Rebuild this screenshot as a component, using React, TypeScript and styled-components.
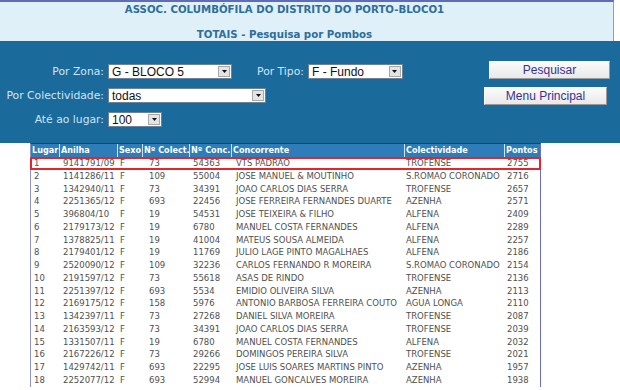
import React from "react";
import styled, { createGlobalStyle } from "styled-components";

const GlobalStyle = createGlobalStyle`
  html, body {
    margin: 0;
    padding: 0;
    background: #ffffff;
  }
`;

const Page = styled.div`
  width: 620px;
  height: 390px;
  overflow: hidden;
  font-family: "DejaVu Sans", sans-serif;
`;

const Banner = styled.header`
  width: 614px;
  height: 41px;
  box-sizing: border-box;
  background: #e0f0f8;
  border-top: 2px solid #5f6db6;
  border-right: 1px solid #8c9cc8;
  display: flex;
  flex-direction: column;
  align-items: center;
  padding: 2px 44px 0 0;
  gap: 13px;
`;

const BannerLine = styled.div`
  font-family: "DejaVu Sans", sans-serif;
  font-weight: bold;
  font-size: 10.2px;
  line-height: 12px;
  color: #2d6e9c;
  white-space: nowrap;
`;

const Panel = styled.section`
  height: 102px;
  background: #1b6a9c;
  display: flex;
`;

const FormArea = styled.div`
  flex: 0 0 484px;
  padding-top: 23px;
  display: flex;
  flex-direction: column;
  gap: 9px;
`;

const FormRow = styled.div`
  display: flex;
  align-items: center;
  height: 15px;
`;

const Label = styled.label<{ $width?: number; $gap?: number }>`
  flex: 0 0 ${(p) => (p.$width ? `${p.$width}px` : "auto")};
  margin-left: ${(p) => p.$gap ?? 0}px;
  margin-right: 4px;
  text-align: right;
  font-family: "DejaVu Sans", sans-serif;
  font-size: 10.8px;
  color: #cfe5f5;
  white-space: nowrap;
`;

const Select = styled.div<{ $width: number }>`
  width: ${(p) => p.$width}px;
  height: 15px;
  box-sizing: border-box;
  background: #ffffff;
  border: 1px solid #6f8194;
  display: flex;
  align-items: center;
  justify-content: space-between;
  padding: 0 1px 0 3px;
`;

const SelectValue = styled.span`
  font-family: "Liberation Sans", Arial, sans-serif;
  font-size: 12px;
  color: #111111;
  white-space: nowrap;
`;

const SelectArrow = styled.span`
  width: 12px;
  height: 11px;
  box-sizing: border-box;
  background: #e4e4e4;
  border: 1px solid #a9a9a9;
  display: flex;
  align-items: center;
  justify-content: center;
`;

const ButtonColumn = styled.div`
  padding-top: 20px;
  display: flex;
  flex-direction: column;
  align-items: flex-start;
  gap: 8px;
`;

const Button = styled.button<{ $width: number; $offset?: number }>`
  width: ${(p) => p.$width}px;
  height: 18px;
  margin-left: ${(p) => p.$offset ?? 0}px;
  box-sizing: border-box;
  padding: 0;
  background: linear-gradient(#fbfbfb, #e9e9e9);
  border: 1px solid;
  border-color: #ffffff #9a9a9a #9a9a9a #ffffff;
  font-family: "Liberation Sans", Arial, sans-serif;
  font-size: 12px;
  color: #353392;
  cursor: pointer;
`;

const Table = styled.div`
  margin-left: 30px;
  width: 511px;
  box-sizing: border-box;
  border-left: 1px solid #8f93c6;
  border-right: 1px solid #6b6fbd;
  border-top: 1px solid #18466f;
`;

const COLUMNS = "28px 58px 25px 47px 42px 173px 100px 36px";

const HeadRow = styled.div`
  display: grid;
  grid-template-columns: ${COLUMNS};
  height: 13px;
  background: #2f7db8;
`;

const HeadCell = styled.div<{ $first?: boolean }>`
  box-sizing: border-box;
  border-left: ${(p) => (p.$first ? "none" : "1px solid #cfe2f1")};
  padding-left: 1px;
  font-family: "DejaVu Sans", sans-serif;
  font-weight: bold;
  font-size: 8.1px;
  line-height: 13px;
  color: #ffffff;
  white-space: nowrap;
`;

const Row = styled.div<{ $highlight?: boolean }>`
  display: grid;
  grid-template-columns: ${COLUMNS};
  height: 12.75px;
  background: #ffffff;
  box-shadow: ${(p) => (p.$highlight ? "inset 0 0 0 2px #e2262c" : "none")};
  margin-left: ${(p) => (p.$highlight ? "-1px" : "0")};
  margin-right: ${(p) => (p.$highlight ? "-1px" : "0")};
  padding-left: ${(p) => (p.$highlight ? "1px" : "0")};
  padding-right: ${(p) => (p.$highlight ? "1px" : "0")};
`;

const Cell = styled.div<{ $pad: number }>`
  padding-left: ${(p) => p.$pad}px;
  font-family: "DejaVu Sans", sans-serif;
  font-size: 8.5px;
  line-height: 12.75px;
  color: #4f4f4f;
  white-space: nowrap;
`;

const headers = [
  "Lugar",
  "Anilha",
  "Sexo",
  "Nº Colect.",
  "Nº Conc.",
  "Concorrente",
  "Colectividade",
  "Pontos",
];

const pads = [3, 4, 3, 7, 4, 5, 2, 3];

const rows: string[][] = [
  ["1", "9141791/09", "F", "73", "54363", "VTS PADRAO", "TROFENSE", "2755"],
  ["2", "1141286/11", "F", "109", "55004", "JOSE MANUEL & MOUTINHO", "S.ROMAO CORONADO", "2716"],
  ["3", "1342940/11", "F", "73", "34391", "JOAO CARLOS DIAS SERRA", "TROFENSE", "2657"],
  ["4", "2251365/12", "F", "693", "22456", "JOSE FERREIRA FERNANDES DUARTE", "AZENHA", "2571"],
  ["5", "396804/10", "F", "19", "54531", "JOSE TEIXEIRA & FILHO", "ALFENA", "2409"],
  ["6", "2179173/12", "F", "19", "6780", "MANUEL COSTA FERNANDES", "ALFENA", "2289"],
  ["7", "1378825/11", "F", "19", "41004", "MATEUS SOUSA ALMEIDA", "ALFENA", "2257"],
  ["8", "2179401/12", "F", "19", "11769", "JULIO LAGE PINTO MAGALHAES", "ALFENA", "2186"],
  ["9", "2520090/12", "F", "109", "32236", "CARLOS FERNANDO R MOREIRA", "S.ROMAO CORONADO", "2154"],
  ["10", "2191597/12", "F", "73", "55618", "ASAS DE RINDO", "TROFENSE", "2136"],
  ["11", "2251397/12", "F", "693", "5534", "EMIDIO OLIVEIRA SILVA", "AZENHA", "2113"],
  ["12", "2169175/12", "F", "158", "5976", "ANTONIO BARBOSA FERREIRA COUTO", "AGUA LONGA", "2110"],
  ["13", "1342397/11", "F", "73", "27268", "DANIEL SILVA MOREIRA", "TROFENSE", "2087"],
  ["14", "2163593/12", "F", "73", "34391", "JOAO CARLOS DIAS SERRA", "TROFENSE", "2039"],
  ["15", "1331507/11", "F", "19", "6780", "MANUEL COSTA FERNANDES", "ALFENA", "2032"],
  ["16", "2167226/12", "F", "73", "29266", "DOMINGOS PEREIRA SILVA", "TROFENSE", "2021"],
  ["17", "1429742/11", "F", "693", "22295", "JOSE LUIS SOARES MARTINS PINTO", "AZENHA", "1957"],
  ["18", "2252077/12", "F", "693", "52994", "MANUEL GONCALVES MOREIRA", "AZENHA", "1938"],
];

const Dropdown: React.FC<{ value: string; width: number }> = ({ value, width }) => (
  <Select $width={width}>
    <SelectValue>{value}</SelectValue>
    <SelectArrow>
      <svg width="5" height="3" viewBox="0 0 5 3">
        <path d="M0 0H5L2.5 3Z" fill="#111" />
      </svg>
    </SelectArrow>
  </Select>
);

export default function App() {
  return (
    <Page>
      <GlobalStyle />
      <Banner>
        <BannerLine>ASSOC. COLUMBÓFILA DO DISTRITO DO PORTO-BLOCO1</BannerLine>
        <BannerLine>TOTAIS - Pesquisa por Pombos</BannerLine>
      </Banner>
      <Panel>
        <FormArea>
          <FormRow>
            <Label $width={104}>Por Zona:</Label>
            <Dropdown value="G - BLOCO 5" width={124} />
            <Label $gap={25}>Por Tipo:</Label>
            <Dropdown value="F - Fundo" width={95} />
          </FormRow>
          <FormRow>
            <Label $width={104}>Por Colectividade:</Label>
            <Dropdown value="todas" width={158} />
          </FormRow>
          <FormRow>
            <Label $width={104}>Até ao lugar:</Label>
            <Dropdown value="100" width={54} />
          </FormRow>
        </FormArea>
        <ButtonColumn>
          <Button $width={121} $offset={5}>
            Pesquisar
          </Button>
          <Button $width={123}>Menu Principal</Button>
        </ButtonColumn>
      </Panel>
      <Table>
        <HeadRow>
          {headers.map((h, i) => (
            <HeadCell key={h} $first={i === 0}>
              {h}
            </HeadCell>
          ))}
        </HeadRow>
        {rows.map((r, i) => (
          <Row key={r[0]} $highlight={i === 0}>
            {r.map((v, j) => (
              <Cell key={j} $pad={pads[j]}>
                {v}
              </Cell>
            ))}
          </Row>
        ))}
      </Table>
    </Page>
  );
}
